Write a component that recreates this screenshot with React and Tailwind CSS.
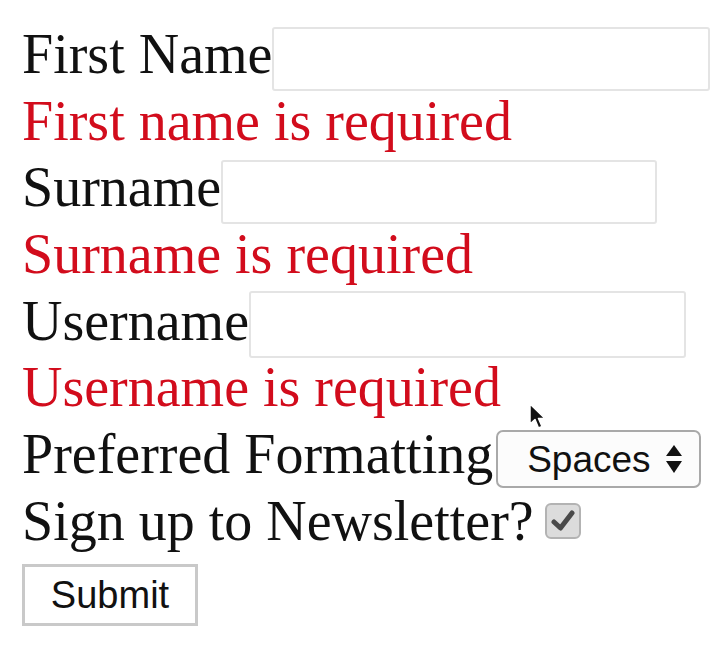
import React from "react";

const line = "flex items-start h-[66.7px] shrink-0";
const label = "leading-[66.7px] whitespace-nowrap";

function TextInput({ w }) {
  return (
    <div
      className={`mt-[6px] h-[64px] ${w} border-2 border-[#e4e4e4] rounded-[3px] bg-white`}
    />
  );
}

export default function App() {
  return (
    <div className="relative w-[722px] h-[658px] bg-white overflow-hidden">
      <form
        className="flex flex-col pt-[21px] pl-[22px] text-[56px] text-[#111] font-['Liberation_Serif','Times_New_Roman',serif]"
        onSubmit={(e) => e.preventDefault()}
      >
        <div className={line}>
          <span className={label}>First Name</span>
          <TextInput w="w-[438px]" />
        </div>
        <div className={`${line} text-[#d20c1c]`}>
          <span className={label}>First name is required</span>
        </div>
        <div className={line}>
          <span className={label}>Surname</span>
          <TextInput w="w-[436px]" />
        </div>
        <div className={`${line} text-[#d20c1c]`}>
          <span className={label}>Surname is required</span>
        </div>
        <div className={line}>
          <span className={label}>Username</span>
          <div className="mt-[3px] h-[67px] w-[437px] border-2 border-[#e4e4e4] rounded-[3px] bg-white" />
        </div>
        <div className={`${line} text-[#d20c1c]`}>
          <span className={label}>Username is required</span>
        </div>
        <div className={line}>
          <span className={label}>Preferred Formatting</span>
          <div className="ml-[3px] mt-[9px] h-[58px] w-[205px] border-2 border-[#a9a9a9] rounded-[7px] bg-[#fcfcfc] flex items-center pl-[29px] pr-[16px] justify-between font-['Liberation_Sans',Arial,sans-serif] text-[37px] leading-none text-[#111]">
            <span className="mt-[1px]">Spaces</span>
            <svg width="18" height="30" viewBox="0 0 18 30">
              <polygon points="9,1 17,12 1,12" fill="#111" />
              <polygon points="1,17 17,17 9,29" fill="#111" />
            </svg>
          </div>
        </div>
        <div className={line}>
          <span className={label}>Sign up to Newsletter?</span>
          <div className="ml-[11px] mt-[15px] w-[36px] h-[36px] rounded-[6px] border-2 border-[#b3b3b3] bg-[#dcdcdc] flex items-center justify-center">
            <svg width="24" height="22" viewBox="0 0 24 22">
              <path
                d="M3 12 L9.5 18 L21 3"
                fill="none"
                stroke="#4a4a4a"
                strokeWidth="5"
                strokeLinecap="round"
                strokeLinejoin="round"
              />
            </svg>
          </div>
        </div>
        <div className={line}>
          <button
            type="submit"
            className="mt-[9px] h-[62px] w-[176px] border-[3px] border-[#c9c9c9] bg-white flex items-center justify-center font-['Liberation_Sans',Arial,sans-serif] text-[38px] leading-none text-[#111]"
          >
            Submit
          </button>
        </div>
      </form>
      <svg
        className="absolute left-[529px] top-[403px]"
        width="18"
        height="28"
        viewBox="0 0 18 28"
      >
        <path
          d="M1 1 L1 21 L6 16.5 L9.5 25 L13 23.5 L9.5 15.5 L16 15.5 Z"
          fill="#111"
          stroke="#fff"
          strokeWidth="1.5"
          strokeLinejoin="round"
        />
      </svg>
    </div>
  );
}
